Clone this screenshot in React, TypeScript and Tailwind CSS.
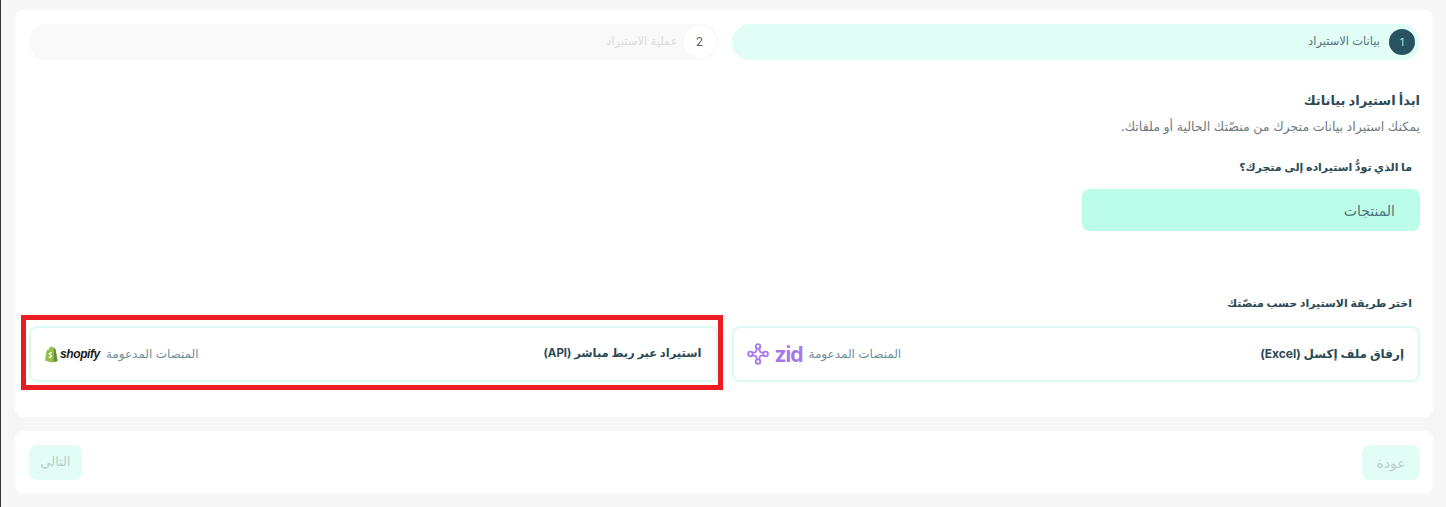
const FONT = "font-['Inter','DejaVu_Sans','Noto_Sans',sans-serif]";

function ShopifyLogo() {
  return (
    <div dir="ltr" className="flex items-center gap-[2px]">
      <svg width="14" height="17" viewBox="0 0 14 17">
        <path d="M1 14.5 2.6 4.6c.1-.4 1.2-.8 2.2-1.1C5.2 1.9 6.2.6 7.4.6c.7 0 1.2.4 1.5 1l1 .1 1.5 1.3L13.6 15 7.8 16.4Z" fill="#95bf47" />
        <path d="m10 1.8 1.4 1.2L13.6 15 9.6 16Z" fill="#5e8e3e" />
        <path d="M8.3 6.4c-.5-.3-1-.3-1.3-.3-1.4 0-2.2 1-2.2 2 0 1.3 1.9 1.4 1.9 2.2 0 .3-.3.6-.7.6-.6 0-1.2-.4-1.2-.4l-.3 1.1s.6.5 1.5.5c1.2 0 2-.8 2-2 0-1.5-1.9-1.6-1.9-2.3 0-.2.2-.5.8-.5.4 0 .9.2.9.2Z" fill="#fff" />
      </svg>
      <span className="font-['Liberation_Sans',sans-serif] text-[12px] font-bold italic leading-none tracking-[-0.4px] text-[#1c1c1c]">
        shopify
      </span>
    </div>
  );
}

function ZidLogo() {
  return (
    <div dir="ltr" className="flex items-center gap-[6px]">
      <svg width="22" height="22" viewBox="0 0 22 22" fill="none" stroke="#a678ea" strokeWidth="1.8">
        <circle cx="11" cy="3.4" r="2.3" />
        <circle cx="11" cy="18.6" r="2.3" />
        <circle cx="3.4" cy="11" r="2.3" />
        <circle cx="18.6" cy="11" r="2.3" />
        <path d="M9.6 5.4C9.8 8.6 8.6 9.8 5.4 9.6M12.4 5.4c-.2 3.2 1 4.4 4.2 4.2M9.6 16.6c.2-3.2-1-4.4-4.2-4.2M12.4 16.6c-.2-3.2 1-4.4 4.2-4.2" />
      </svg>
      <span className="font-['Inter',sans-serif] text-[21px] font-bold leading-none tracking-[-1px] text-[#a678ea]">
        zid
      </span>
    </div>
  );
}

function MethodCard({ title, titleClass, logo }: { title: string; titleClass: string; logo: React.ReactNode }) {
  return (
    <div className="flex h-[56px] items-center justify-between rounded-[8px] border-2 border-[#dcfaf4] bg-white pl-[13px] pr-[14px]">
      <span className={`${titleClass} font-bold text-[#2b4a55]`}>{title}</span>
      <div className="flex items-center gap-[6px]">
        <span className="text-[12px] text-[#6a8f9a]">المنصات المدعومة</span>
        {logo}
      </div>
    </div>
  );
}

export default function App() {
  return (
    <div
      dir="rtl"
      className={`${FONT} relative flex h-[507px] w-full flex-col gap-[14px] overflow-hidden border-l border-l-[#333] bg-[#f7f7f8] pb-[14px] pl-[14px] pr-[13px] pt-[10px]`}
    >
      <div className="flex h-[407px] flex-col rounded-[8px] bg-white pl-[14px] pr-[13px] pt-[14px]">
        <div className="grid grid-cols-2 gap-[14px]">
          <div className="flex h-[36px] items-center gap-[6px] rounded-full bg-[#e0fdf6] pr-[2px]">
            <div className="flex h-[32px] w-[32px] items-center justify-center rounded-full border-[3px] border-[#e0fdf6] bg-[#28525f] text-[11px] text-[#b5dcdc]">
              1
            </div>
            <span className="text-[11.5px] text-[#54747e]">بيانات الاستيراد</span>
          </div>
          <div className="flex h-[36px] items-center gap-[6px] rounded-full bg-[#f9f9f9] pr-[2px]">
            <div className="flex h-[32px] w-[32px] items-center justify-center rounded-full bg-white text-[12px] text-[#666]">
              2
            </div>
            <span className="text-[11.5px] text-[#dcdcdc]">عملية الاستيراد</span>
          </div>
        </div>

        <h2 className="mt-[28px] text-[13px] font-bold leading-[24px] text-[#2b4a55]">ابدأ استيراد بياناتك</h2>
        <p className="mt-[6px] text-[12.6px] leading-[18px] text-[#6e7a80]">
          يمكنك استيراد بيانات متجرك من منصّتك الحالية أو ملفاتك.
        </p>
        <p className="mt-[22px] pr-[8px] text-[11px] font-bold leading-[18px] text-[#2b4a55]">ما الذي تودُّ استيراده إلى متجرك؟</p>
        <div className="mt-[13px] flex h-[42px] w-[338px] items-center rounded-[8px] bg-[#bbfde8] pr-[25px] text-[14px] text-[#4f7580]">
          المنتجات
        </div>

        <p className="mt-[63px] pr-[8px] text-[11px] font-bold leading-[18px] text-[#2b4a55]">اختر طريقة الاستيراد حسب منصّتك</p>
        <div className="mt-[14px] grid grid-cols-2 gap-[14px]">
          <MethodCard title="إرفاق ملف إكسل (Excel)" titleClass="text-[12px]" logo={<ZidLogo />} />
          <MethodCard title="استيراد عبر ربط مباشر (API)" titleClass="text-[11.5px]" logo={<ShopifyLogo />} />
        </div>
      </div>

      <div className="flex h-[62px] items-center justify-between rounded-[8px] bg-white pl-[14px] pr-[13px]">
        <button type="button" className="flex h-[35px] w-[58px] items-center justify-center rounded-[8px] bg-[#e2fdf6] text-[14px] text-[#b9cfcc]">
          عودة
        </button>
        <button type="button" className="flex h-[35px] w-[53px] items-center justify-center rounded-[8px] bg-[#e2fdf6] text-[13px] text-[#b9cfcc]">
          التالي
        </button>
      </div>

      <div className="pointer-events-none absolute left-[20px] top-[315px] h-[75px] w-[702px] border-[5px] border-[#ec1c24]" />
    </div>
  );
}
